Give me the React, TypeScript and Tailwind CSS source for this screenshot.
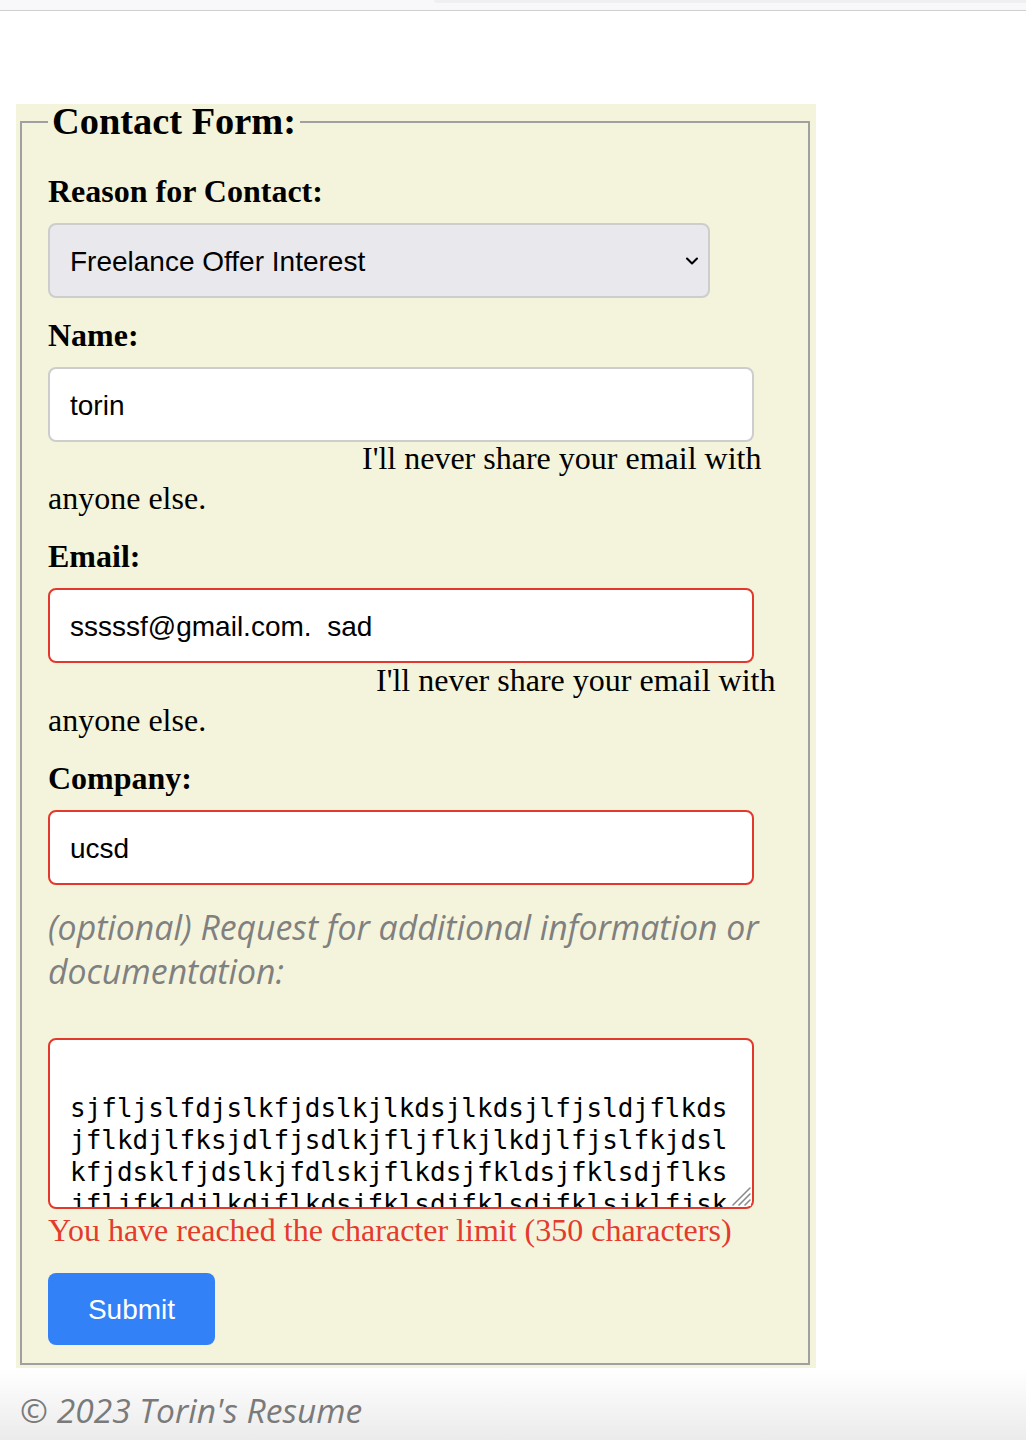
import React from 'react';
import { ChevronDown } from 'lucide-react';

// Contact form page: beige fieldset with labelled inputs, textarea and footer
const serif = "font-['Liberation_Serif','Times_New_Roman',serif]";
const sans = "font-['Liberation_Sans',Arial,sans-serif]";
const openSans = "font-['Open_Sans','Noto_Sans',sans-serif]";

const textareaValue =
  '\n' +
  'sjfljslfdjslkfjdslkjlkdsjlkdsjlfjsldjflkds\n' +
  'jflkdjlfksjdlfjsdlkjfljflkjlkdjlfjslfkjdsl\n' +
  'kfjdsklfjdslkjfdlskjflkdsjfkldsjfklsdjflks\n' +
  'jfljfkldjlkdjflkdsjfklsdjfklsdjfklsjklfjsk\n' +
  'dlkfjsldkfjlsdkjflsdkjflskdjflksdjflksdjf';

const Label: React.FC<{ children: React.ReactNode; className?: string }> = ({ children, className }) => (
  <label className={`block text-[32px] font-bold leading-[37px] text-black ${className ?? ''}`}>{children}</label>
);

const Helper: React.FC<{ indent: string; className?: string }> = ({ indent, className }) => (
  <div className={`text-[32px] leading-[40px] text-black ${className ?? ''}`}>
    <div className={indent}>I'll never share your email with</div>
    <div>anyone else.</div>
  </div>
);

const App: React.FC = () => {
  return (
    <div className={`min-h-[1440px] bg-white flex flex-col ${serif}`}>
      {/* browser-ish top strip */}
      <div className="h-[11px] bg-[#f8f8fa] border-b border-[#cfcfcf] flex">
        <div className="ml-[434px] flex-1 h-[3px] bg-[#efeff2] rounded-bl-md" />
      </div>

      <div className="ml-4 mt-[93px] w-[800px] bg-[#f4f4dc] pl-1 pr-1.5 pb-[3px]">
        <fieldset className="border-2 border-[#a0a0a0] px-[26px] pb-[18px]">
          <legend className="px-1 text-[38.4px] font-bold leading-[35px] text-black">Contact Form:</legend>

          <Label className="mt-[34px]">Reason for Contact:</Label>
          <div className="relative mt-[13px] w-[662px]">
            <select
              defaultValue="freelance"
              className={`appearance-none w-full h-[75px] rounded-lg border-2 border-[#cdcdcd] bg-[#e9e9ed] pl-5 pt-[3px] text-[28px] text-black ${sans}`}
            >
              <option value="freelance">Freelance Offer Interest</option>
              <option value="job">Job Opportunity</option>
              <option value="other">Other</option>
            </select>
            <ChevronDown
              size={20}
              strokeWidth={2.5}
              className="absolute right-[8px] top-1/2 -translate-y-1/2 text-black pointer-events-none"
            />
          </div>

          <Label className="mt-[19px]">Name:</Label>
          <input
            defaultValue="torin"
            className={`block mt-[13px] w-[706px] h-[75px] rounded-lg border-2 border-[#cdcdcd] bg-white px-5 pt-[3px] text-[28px] text-black ${sans}`}
          />
          <Helper indent="pl-[314px]" className="-mt-[4px]" />

          <Label className="mt-[20px]">Email:</Label>
          <input
            defaultValue="sssssf@gmail.com.  sad"
            className={`block mt-[13px] w-[706px] h-[75px] rounded-lg border-2 border-[#e3382c] bg-white px-5 pt-[3px] text-[28px] text-black ${sans}`}
          />
          <Helper indent="pl-[328px]" className="-mt-[3px]" />

          <Label className="mt-[20px]">Company:</Label>
          <input
            defaultValue="ucsd"
            className={`block mt-[13px] w-[706px] h-[75px] rounded-lg border-2 border-[#e3382c] bg-white px-5 pt-[3px] text-[28px] text-black ${sans}`}
          />

          <p className={`mt-[20px] text-[33.8px] italic leading-[44px] text-[#808080] ${openSans}`}>
            (optional) Request for additional information or documentation:
          </p>

          <div className="relative mt-[45px] w-[706px]">
            <textarea
              defaultValue={textareaValue}
              className="block w-full h-[171px] rounded-lg border-2 border-[#e3382c] bg-white px-5 pt-5 overflow-hidden resize-none text-[26px] leading-[32px] text-black font-['DejaVu_Sans_Mono','Liberation_Mono',monospace]"
            />
            {/* resize grip */}
            <svg
              width="20"
              height="20"
              viewBox="0 0 20 20"
              className="absolute right-[3px] bottom-[3px] pointer-events-none"
            >
              <rect x="0" y="0" width="20" height="20" fill="white" opacity="0.85" />
              <g stroke="#8a8a8a" strokeWidth="1.6" strokeLinecap="round">
                <line x1="19" y1="2" x2="2" y2="19" />
                <line x1="19" y1="8" x2="8" y2="19" />
                <line x1="19" y1="14" x2="14" y2="19" />
              </g>
            </svg>
          </div>

          <p className="mt-[3px] text-[32px] leading-[37px] text-[#e53a2e]">
            You have reached the character limit (350 characters)
          </p>

          <button
            type="submit"
            className={`block mt-[24px] w-[167px] h-[72px] rounded-lg bg-[#3381f6] pt-[2px] text-[28px] text-white ${sans}`}
          >
            Submit
          </button>
        </fieldset>
      </div>

      <footer className="h-[72px] pt-5 px-5 bg-linear-to-b from-white to-[#ebebeb]">
        <p className={`text-[33.6px] italic leading-[44px] text-[#7a7a7a] ${openSans}`}>© 2023 Torin's Resume</p>
      </footer>
    </div>
  );
};

export default App;
